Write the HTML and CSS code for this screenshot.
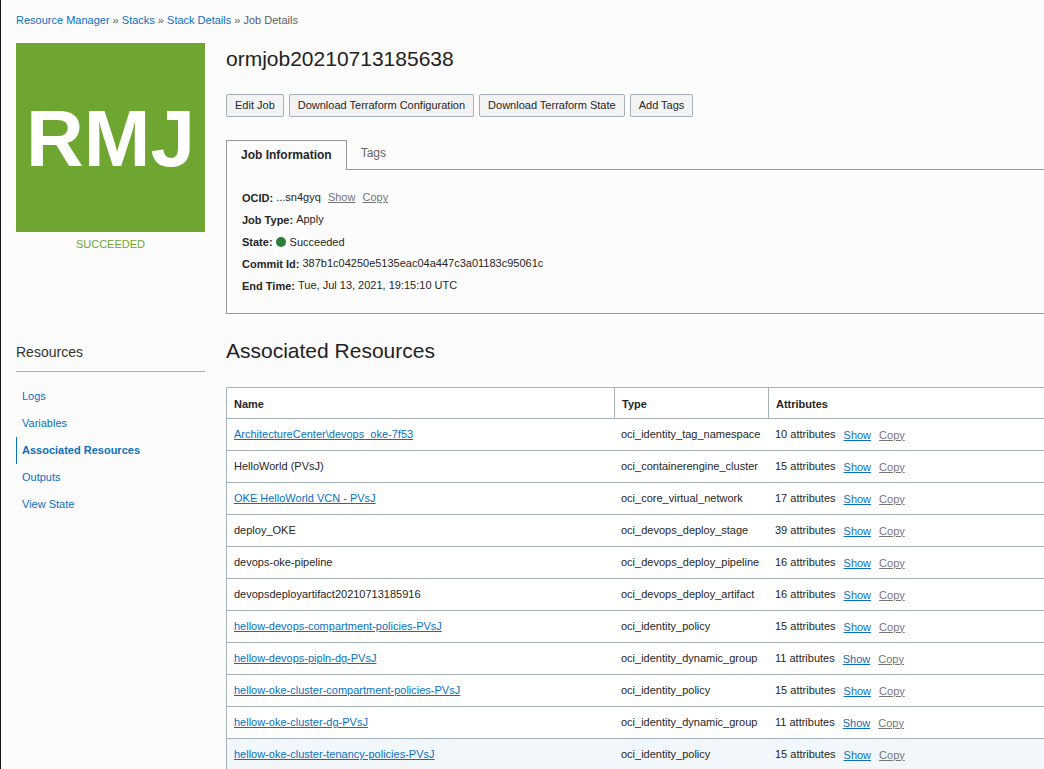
FILE: index.html
```html
<!DOCTYPE html>
<html lang="en">
<head>
<meta charset="utf-8">
<title>Job Details</title>
<link rel="stylesheet" href="styles.css">
</head>
<body>
<nav class="breadcrumb" aria-label="Breadcrumb"><a href="#">Resource Manager</a> » <a href="#">Stacks</a> » <a href="#">Stack Details</a> » <span>Job Details</span></nav>
<div class="layout">
  <aside class="side">
    <div class="badge">RMJ</div>
    <p class="status">SUCCEEDED</p>
  </aside>
  <main class="summary">
    <h1 class="title">ormjob20210713185638</h1>
    <div class="actions">
      <button type="button" class="btn">Edit Job</button>
      <button type="button" class="btn">Download Terraform Configuration</button>
      <button type="button" class="btn">Download Terraform State</button>
      <button type="button" class="btn">Add Tags</button>
    </div>
    <div class="tabs" role="tablist">
      <button type="button" class="tab tab-active" role="tab" aria-selected="true">Job Information</button>
      <button type="button" class="tab" role="tab" aria-selected="false">Tags</button>
    </div>
    <dl class="details">
      <div class="detail"><dt>OCID:</dt><dd>...sn4gyq <a class="muted" href="#">Show</a> <a class="muted" href="#">Copy</a></dd></div>
      <div class="detail"><dt>Job Type:</dt><dd>Apply</dd></div>
      <div class="detail"><dt>State:</dt><dd class="state"><span class="dot"></span>Succeeded</dd></div>
      <div class="detail"><dt>Commit Id:</dt><dd>387b1c04250e5135eac04a447c3a01183c95061c</dd></div>
      <div class="detail"><dt>End Time:</dt><dd>Tue, Jul 13, 2021, 19:15:10 UTC</dd></div>
    </dl>
  </main>
  <nav class="side" aria-label="Resources">
    <h2 class="side-title">Resources</h2>
    <ul class="menu">
      <li><a href="#">Logs</a></li>
      <li><a href="#">Variables</a></li>
      <li><a class="current" href="#">Associated Resources</a></li>
      <li><a href="#">Outputs</a></li>
      <li><a href="#">View State</a></li>
    </ul>
  </nav>
  <section class="resources">
    <h2 class="title">Associated Resources</h2>
    <table class="grid">
      <colgroup><col class="col-name"><col class="col-type"><col></colgroup>
      <thead><tr><th>Name</th><th>Type</th><th>Attributes</th></tr></thead>
      <tbody>
        <tr><td><a href="#">ArchitectureCenter\devops_oke-7f53</a></td><td>oci_identity_tag_namespace</td><td><div class="attrs">10 attributes <a href="#">Show</a> <a class="muted" href="#">Copy</a></div></td></tr>
        <tr><td>HelloWorld (PVsJ)</td><td>oci_containerengine_cluster</td><td><div class="attrs">15 attributes <a href="#">Show</a> <a class="muted" href="#">Copy</a></div></td></tr>
        <tr><td><a href="#">OKE HelloWorld VCN - PVsJ</a></td><td>oci_core_virtual_network</td><td><div class="attrs">17 attributes <a href="#">Show</a> <a class="muted" href="#">Copy</a></div></td></tr>
        <tr><td>deploy_OKE</td><td>oci_devops_deploy_stage</td><td><div class="attrs">39 attributes <a href="#">Show</a> <a class="muted" href="#">Copy</a></div></td></tr>
        <tr><td>devops-oke-pipeline</td><td>oci_devops_deploy_pipeline</td><td><div class="attrs">16 attributes <a href="#">Show</a> <a class="muted" href="#">Copy</a></div></td></tr>
        <tr><td>devopsdeployartifact20210713185916</td><td>oci_devops_deploy_artifact</td><td><div class="attrs">16 attributes <a href="#">Show</a> <a class="muted" href="#">Copy</a></div></td></tr>
        <tr><td><a href="#">hellow-devops-compartment-policies-PVsJ</a></td><td>oci_identity_policy</td><td><div class="attrs">15 attributes <a href="#">Show</a> <a class="muted" href="#">Copy</a></div></td></tr>
        <tr><td><a href="#">hellow-devops-pipln-dg-PVsJ</a></td><td>oci_identity_dynamic_group</td><td><div class="attrs">11 attributes <a href="#">Show</a> <a class="muted" href="#">Copy</a></div></td></tr>
        <tr><td><a href="#">hellow-oke-cluster-compartment-policies-PVsJ</a></td><td>oci_identity_policy</td><td><div class="attrs">15 attributes <a href="#">Show</a> <a class="muted" href="#">Copy</a></div></td></tr>
        <tr><td><a href="#">hellow-oke-cluster-dg-PVsJ</a></td><td>oci_identity_dynamic_group</td><td><div class="attrs">11 attributes <a href="#">Show</a> <a class="muted" href="#">Copy</a></div></td></tr>
        <tr class="highlight"><td><a href="#">hellow-oke-cluster-tenancy-policies-PVsJ</a></td><td>oci_identity_policy</td><td><div class="attrs">15 attributes <a href="#">Show</a> <a class="muted" href="#">Copy</a></div></td></tr>
      </tbody>
    </table>
  </section>
</div>
</body>
</html>
```
FILE: styles.css
```css
* { box-sizing: border-box; }

body {
  margin: 0;
  min-height: 100vh;
  padding: 12px 0 0 15px;
  border-left: 1px solid #17171c;
  background: #fcfcfc;
  color: #262626;
  font: 11px/16px "Liberation Sans", Arial, sans-serif;
}

a { color: #0b6fc2; text-underline-offset: 1px; }
a.muted { color: #757575; }

.breadcrumb { color: #5c5c5c; }
.breadcrumb a { text-decoration: none; }

.layout {
  display: grid;
  grid-template-columns: 189px minmax(0, 1fr);
  column-gap: 21px;
  row-gap: 23px;
  padding-top: 15px;
}

.badge {
  display: flex;
  align-items: center;
  justify-content: center;
  aspect-ratio: 1;
  padding-top: 2px;
  background: #6ea631;
  color: #fff;
  font-size: 80px;
  font-weight: bold;
  line-height: 1;
}
.status { margin: 4px 0 0; color: #6ea631; text-align: center; }

.title {
  margin: 0;
  color: #222;
  font-size: 21px;
  font-weight: normal;
  line-height: 28px;
}
.summary .title { padding-top: 2px; }

.actions { display: flex; gap: 5px; margin-top: 21px; }
.btn {
  height: 23px;
  padding: 0 8px 2px;
  border: 1px solid #a4b0bb;
  border-radius: 2px;
  background: #f3f3f3;
  color: #262626;
  font: inherit;
}

.tabs {
  display: flex;
  height: 30px;
  margin-top: 23px;
  border-bottom: 1px solid #999;
}
.tab {
  height: 26px;
  padding: 0 14px;
  border: 0;
  background: transparent;
  color: #666;
  font: inherit;
  font-size: 12px;
}
.tab-active {
  height: 30px;
  padding: 0 14px 2px;
  border: 1px solid #999;
  border-bottom: 0;
  background: #fcfcfc;
  color: #262626;
  font-weight: bold;
}

.details {
  margin: 0;
  padding: 17px 15px 16px;
  border: 1px solid #999;
  border-width: 0 0 1px 1px;
}
.detail { display: flex; gap: 3px; line-height: 21px; }
.detail dt { padding-top: 1px; font-weight: bold; }
.detail dd { margin: 0; }
.detail a { margin-left: 4px; }
.state { display: flex; align-items: center; gap: 4px; }
.dot { width: 10px; height: 10px; border-radius: 50%; background: #2c7f39; }

.side-title {
  margin: 0;
  padding: 5px 0 9px;
  border-bottom: 1px solid #a4b0bb;
  color: #333;
  font-size: 14px;
  font-weight: normal;
  line-height: 20px;
}
.menu { margin: 0; padding: 11px 0 0; list-style: none; line-height: 27px; }
.menu a {
  display: block;
  padding-left: 5px;
  border-left: 1px solid transparent;
  text-decoration: none;
}
.menu .current { border-color: #0b6fc2; font-weight: bold; }

.grid {
  width: 100%;
  margin-top: 22px;
  border-collapse: separate;
  border-spacing: 0;
  border: 1px solid #a4b0bb;
  border-width: 1px 0 0 1px;
  border-top-left-radius: 2px;
  background: #fff;
  table-layout: fixed;
}
.col-name { width: 387px; }
.col-type { width: 154px; }
.grid th, .grid td {
  height: 32px;
  padding: 0 7px;
  border-bottom: 1px solid #a4b0bb;
  text-align: left;
}
.grid th { height: 31px; padding-top: 2px; }
.grid th + th { border-left: 1px solid #a4b0bb; }
.grid td { padding-bottom: 1px; }
.grid td + td { padding-left: 7px; }
.attrs { display: flex; gap: 8px; }
.attrs a { padding-top: 1px; }
.highlight { background: #f2f7fb; }
```
